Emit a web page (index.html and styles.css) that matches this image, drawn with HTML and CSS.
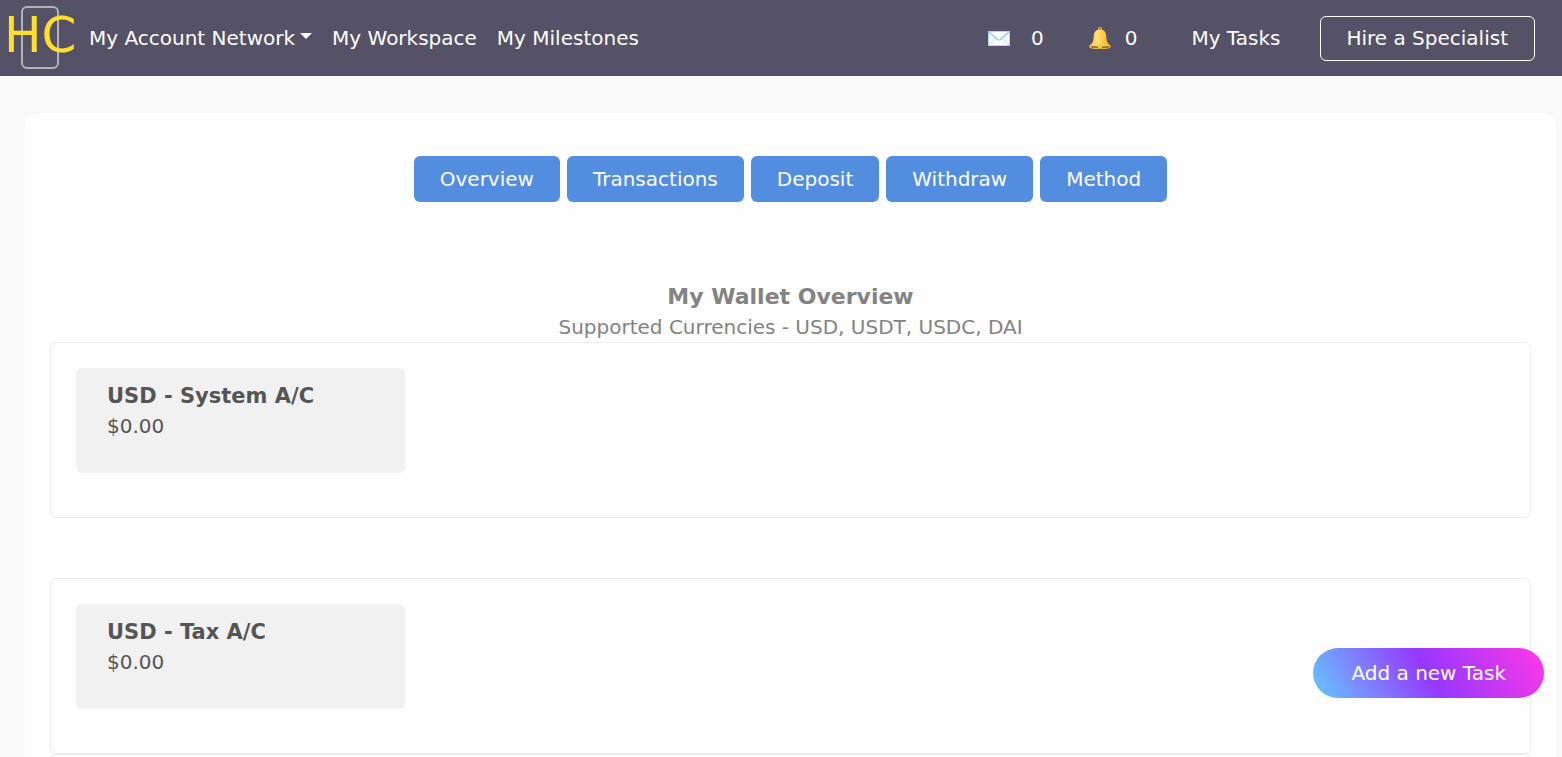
FILE: index.html
```html
<!DOCTYPE html>
<html lang="en">
<head>
<meta charset="utf-8">
<meta name="viewport" content="width=device-width, initial-scale=1">
<title>My Wallet Overview</title>
<link rel="stylesheet" href="styles.css">
</head>
<body>
<header class="navbar">
  <a class="brand" href="#" aria-label="Home">
    <svg width="78" height="76" viewBox="0 0 78 76">
      <rect x="22" y="7" width="36" height="61" rx="5" fill="none" stroke="#b4b2b6" stroke-width="2"/>
      <text class="brand-text" x="4" y="52">HC</text>
    </svg>
  </a>
  <nav class="nav-main">
    <button class="nav-link nav-toggle" type="button">My Account Network<span class="caret"></span></button>
    <a class="nav-link" href="#">My Workspace</a>
    <a class="nav-link" href="#">My Milestones</a>
  </nav>
  <nav class="nav-side">
    <a class="nav-link counter counter-mail" href="#">
      <svg width="24" height="24" viewBox="0 0 24 24" aria-hidden="true">
        <rect x="1.5" y="5.5" width="21" height="14" fill="#fcfeff" stroke="#a9d7f5"/>
        <path d="M2 19l7-6.500M22 19l-7-6.500" fill="none" stroke="#b9def6"/>
        <path d="M2 6l8.500 7.500q1.500 1 3 0L22 6" fill="none" stroke="#8fcaf0" stroke-width="1.300"/>
      </svg>
      <span>0</span>
    </a>
    <a class="nav-link counter" href="#">
      <svg width="24" height="24" viewBox="0 0 24 24" aria-hidden="true">
        <defs>
          <linearGradient id="bell" x1="0" x2="1"><stop offset="0" stop-color="#f2b632"/><stop offset=".35" stop-color="#ffe07a"/><stop offset=".7" stop-color="#fbc53b"/><stop offset="1" stop-color="#dd9a22"/></linearGradient>
        </defs>
        <circle cx="12" cy="2.800" r="1.500" fill="none" stroke="#e0a32c" stroke-width="1.300"/>
        <path d="M12 3.500c4 0 6 2.500 6.300 6.500.3 5 1 7 3.200 8.500.9.700 1.500 1.300 1.500 2.200C23 22.300 18 23 12 23S1 22.300 1 20.700c0-.9.600-1.500 1.500-2.200 2.200-1.500 2.900-3.500 3.200-8.500C6 6 8 3.500 12 3.500z" fill="url(#bell)"/>
        <ellipse cx="12" cy="20.900" rx="9.500" ry="1.500" fill="#a86f1c"/>
        <path d="M3.500 19.300q8.500 1.700 17 0" fill="none" stroke="#ffe38a"/>
        <ellipse cx="12" cy="21" rx="2" ry="1.300" fill="#f7cf58"/>
      </svg>
      <span>0</span>
    </a>
    <a class="nav-link tasks" href="#">My Tasks</a>
    <a class="hire" href="#">Hire a Specialist</a>
  </nav>
</header>

<main class="panel">
  <div class="tabs">
    <button class="tab" type="button">Overview</button>
    <button class="tab" type="button">Transactions</button>
    <button class="tab" type="button">Deposit</button>
    <button class="tab" type="button">Withdraw</button>
    <button class="tab" type="button">Method</button>
  </div>
  <div class="heading">
    <h1 class="title">My Wallet Overview</h1>
    <p class="subtitle">Supported Currencies - USD, USDT, USDC, DAI</p>
  </div>
  <section class="wallet wallet-spaced">
    <div class="account">
      <h2 class="account-name">USD - System A/C</h2>
      <p class="account-amount">$0.00</p>
    </div>
  </section>
  <section class="wallet">
    <div class="account">
      <h2 class="account-name">USD - Tax A/C</h2>
      <p class="account-amount">$0.00</p>
    </div>
  </section>
  <section class="wallet"></section>
</main>

<button class="add-task" type="button">Add a new Task</button>
</body>
</html>
```
FILE: styles.css
```css
* {
  box-sizing: border-box;
}

body {
  margin: 0;
  background: #f9f9f9;
  color: #555;
  font: 20px/30px Verdana, "DejaVu Sans", sans-serif;
}

h1, h2, p {
  margin: 0;
}

button {
  font: inherit;
  cursor: pointer;
}

a {
  text-decoration: none;
}

.navbar {
  display: flex;
  align-items: center;
  background: #555166;
}

.brand {
  display: flex;
  margin-right: 11px;
}

.brand-text {
  fill: #ffde2e;
  font-size: 50px;
}

.nav-main {
  display: flex;
  gap: 20px;
}

.nav-link {
  padding: 0;
  border: 0;
  background: none;
  color: #fff;
  white-space: nowrap;
}

.nav-toggle {
  display: flex;
  align-items: center;
}

.caret {
  margin: 0 0 4px 5px;
  border: 6px solid transparent;
  border-top-color: #fff;
  border-bottom: 0;
}

.nav-side {
  display: flex;
  align-items: center;
  margin-left: auto;
  padding-right: 27px;
}

.counter {
  display: flex;
  align-items: center;
  gap: 13px;
  margin-right: 44px;
}

.counter-mail {
  gap: 20px;
}

.tasks {
  margin: 0 40px 0 10px;
}

.hire {
  padding: 7px 26px 7px 25px;
  border: 1px solid #fff;
  border-radius: 6px;
  color: #fff;
  line-height: 29px;
  white-space: nowrap;
}

.panel {
  margin: 37px 6px 0 25px;
  padding: 43px 25px 25px;
  border-radius: 14px;
  background: #fefefe;
}

.tabs {
  display: flex;
  flex-wrap: wrap;
  justify-content: center;
  gap: 7px;
}

.tab {
  padding: 8px 26px;
  border: 0;
  border-radius: 6px;
  background: #528ddf;
  color: #fff;
}

.heading {
  margin-top: 80px;
  color: #838383;
  text-align: center;
}

.title {
  font-size: 22px;
  line-height: 30px;
}

.wallet {
  min-height: 176px;
  padding: 25px;
  border: 1px solid #ececec;
  border-radius: 6px;
}

.wallet-spaced {
  margin-bottom: 60px;
}

.account {
  width: 23%;
  min-width: 280px;
  padding: 13px 31px 32px;
  border-radius: 6px;
  background: #f1f1f1;
}

.account-name {
  font-size: 21px;
  line-height: 30px;
}

.add-task {
  position: fixed;
  right: 18px;
  bottom: 59px;
  padding: 10px 38px;
  border: 0;
  border-radius: 25px;
  background: linear-gradient(60deg, #64c8ff, #9638ff 50%, #ff38e6);
  color: #fff;
}
```
